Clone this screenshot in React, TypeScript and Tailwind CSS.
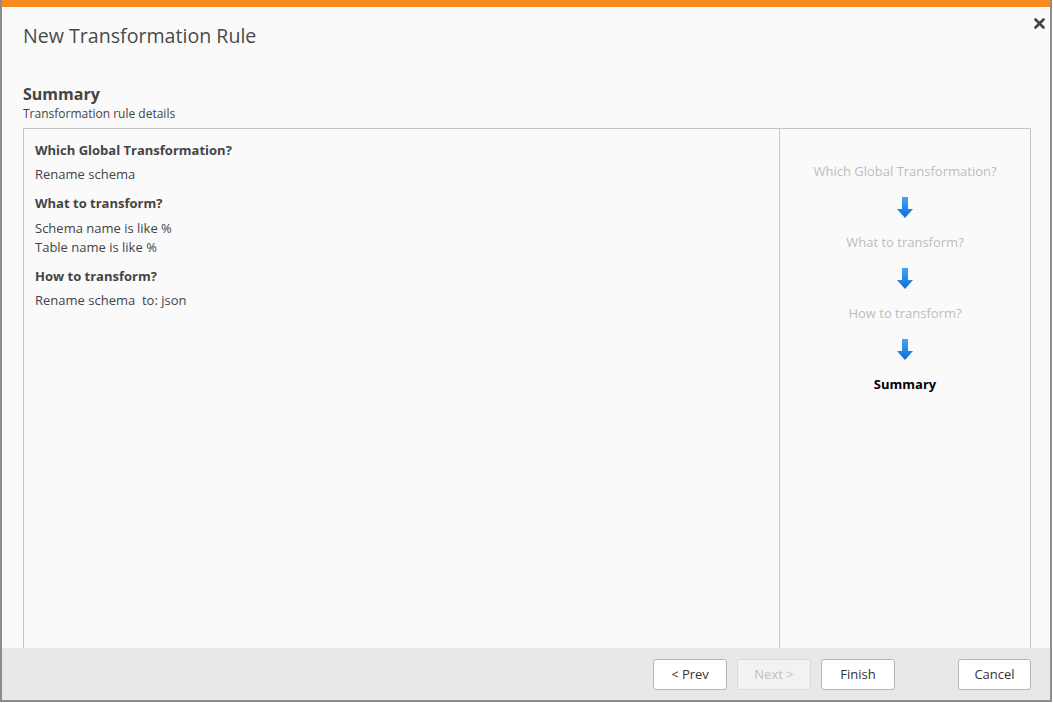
import React from "react";

const font = { fontFamily: '"Open Sans", "Noto Sans", Arial, sans-serif' };

// Blue step arrow used between wizard steps
const DownArrow = () => (
  <svg width="16" height="21" viewBox="0 0 16 21">
    <defs>
      <linearGradient id="arr" x1="0" y1="0" x2="0" y2="1">
        <stop offset="0%" stopColor="#45a4f5" />
        <stop offset="100%" stopColor="#0a6fd6" />
      </linearGradient>
    </defs>
    <path d="M5 0 H11 V12 H16 L8 21 L0 12 H5 Z" fill="url(#arr)" />
  </svg>
);

const steps = ["Which Global Transformation?", "What to transform?", "How to transform?"];

export default function App() {
  return (
    <div
      className="relative w-[1053px] h-[703px] bg-white overflow-hidden text-[#333]"
      style={font}
    >
      <div className="flex flex-col w-[1052px] h-[702px] bg-[#fafafa] border-l-2 border-r-2 border-b-2 border-[#8c8c8c]">
        {/* Top accent */}
        <div className="h-[7px] bg-[#f7891f] shrink-0" />

        {/* Header */}
        <div className="relative px-[21px] pt-[15px]">
          <h1 className="text-[19.6px] leading-[28px] text-[#4a4a4a] font-normal">
            New Transformation Rule
          </h1>
          <button className="absolute right-[4px] top-[9px] w-[14px] h-[14px] flex items-center justify-center">
            <svg width="11" height="11" viewBox="0 0 11 11">
              <path d="M1.5 1.5 L9.5 9.5 M9.5 1.5 L1.5 9.5" stroke="#444" strokeWidth="2.6" strokeLinecap="round" />
            </svg>
          </button>
        </div>

        <div className="px-[21px] pt-[33px]">
          <h2 className="text-[16px] leading-[22px] font-bold text-[#444]">Summary</h2>
          <p className="text-[12px] leading-[16px] text-[#444] mt-[1px]">Transformation rule details</p>
        </div>

        {/* Content box */}
        <div className="flex-1 pl-[21px] pr-[19px] pt-[6px] min-h-0">
          <div className="flex h-full border-t border-l border-r border-[#c6c6c6]">
            <div className="flex-1 px-[11px] pt-[11px] text-[13px] text-[#444]">
              <div className="font-bold leading-[20px]">Which Global Transformation?</div>
              <div className="leading-[20px] mt-[4px]">Rename schema</div>
              <div className="font-bold leading-[20px] mt-[9px]">What to transform?</div>
              <div className="leading-[19px] mt-[6px]">Schema name is like %</div>
              <div className="leading-[19px]">Table name is like %</div>
              <div className="font-bold leading-[20px] mt-[9px]">How to transform?</div>
              <div className="leading-[20px] mt-[4px] whitespace-pre">Rename schema  to: json</div>
            </div>
            <div className="w-[251px] border-l border-[#c6c6c6] flex flex-col items-center pt-[32px] text-[13px]">
              {steps.map((s) => (
                <React.Fragment key={s}>
                  <div className="leading-[20px] text-[#bdbdbd]">{s}</div>
                  <div className="h-[16px]" />
                  <DownArrow />
                  <div className="h-[14px]" />
                </React.Fragment>
              ))}
              <div className="leading-[20px] font-bold text-black">Summary</div>
            </div>
          </div>
        </div>

        {/* Footer */}
        <div className="h-[52px] shrink-0 bg-[#e8e8e8] flex items-start pt-[11px] justify-end pr-[19px] gap-[10px] text-[13px]">
          <button className="w-[74px] h-[31px] bg-white border border-[#b5b5b5] rounded-[3px] text-[#333]">
            &lt; Prev
          </button>
          <button className="w-[74px] h-[31px] bg-[#f2f2f2] border border-[#dadada] rounded-[3px] text-[#c0c0c0]">
            Next &gt;
          </button>
          <button className="w-[74px] h-[31px] bg-white border border-[#b5b5b5] rounded-[3px] text-[#333]">
            Finish
          </button>
          <button className="w-[73px] h-[31px] ml-[53px] bg-white border border-[#b5b5b5] rounded-[3px] text-[#333]">
            Cancel
          </button>
        </div>
      </div>
    </div>
  );
}
